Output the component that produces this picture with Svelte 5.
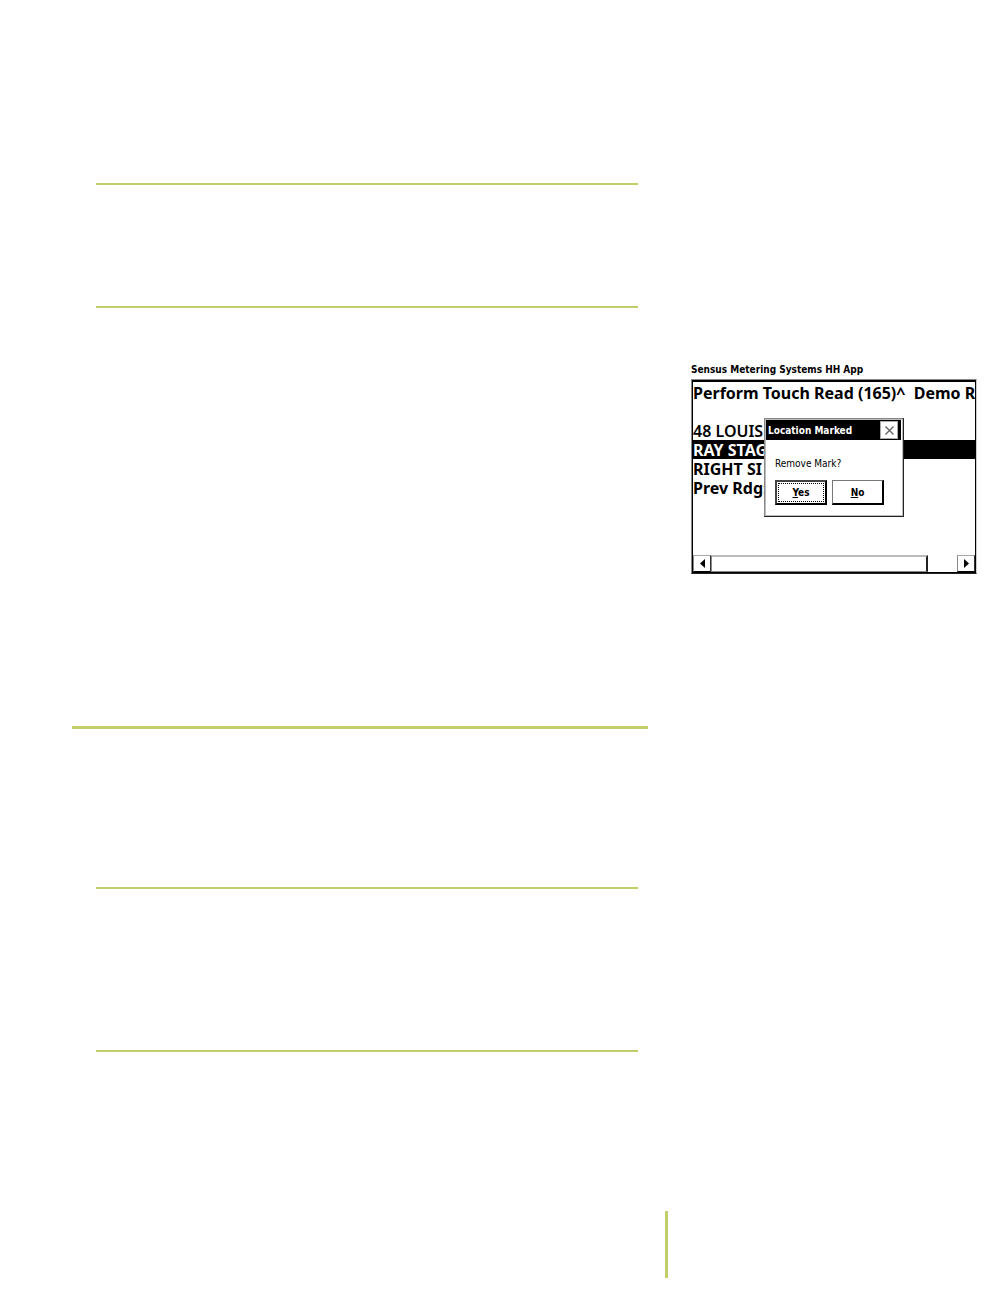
<script>
  const lines = [
    { text: 'Perform Touch Read (165)^  Demo R' },
    { text: '' },
    { text: '48 LOUIS', medium: true },
    { text: 'RAY STAG', selected: true },
    { text: 'RIGHT SI' },
    { text: 'Prev Rdg:' },
  ];

  let open = $state(true);

  function close() {
    open = false;
  }
</script>

<div class="page">
  <div class="columns">
    <main>
      <hr class="first" />
      <hr class="second" />
      <hr class="chapter" />
      <hr class="third" />
      <hr class="fourth" />
    </main>

    <aside>
      <h2>Sensus Metering Systems HH App</h2>
      <div class="screen">
        <div class="lines">
          {#each lines as line}
            <div class="line" class:medium={line.medium} class:selected={line.selected}>{line.text}</div>
          {/each}
        </div>

        <div class="scrollbar">
          <button class="arrow" aria-label="Scroll left">
            <svg width="5" height="9" viewBox="0 0 5 9"><path d="M5 0v9L0 4.5z" /></svg>
          </button>
          <div class="thumb"></div>
          <button class="arrow right" aria-label="Scroll right">
            <svg width="5" height="9" viewBox="0 0 5 9"><path d="M0 0v9l5-4.5z" /></svg>
          </button>
        </div>

        {#if open}
          <div class="dialog" role="dialog" aria-labelledby="dialog-title">
            <div class="titlebar">
              <span id="dialog-title">Location Marked</span>
              <button class="close" aria-label="Close" onclick={close}>
                <svg width="9" height="9" viewBox="0 0 9 9"><path d="M.5.5l8 8M8.5.5l-8 8" /></svg>
              </button>
            </div>
            <p>Remove Mark?</p>
            <div class="actions">
              <button class="default" onclick={close}><span><u>Y</u>es</span></button>
              <button onclick={close}><span><u>N</u>o</span></button>
            </div>
          </div>
        {/if}
      </div>
    </aside>
  </div>

  <footer></footer>
</div>

<style>
  :global(body) {
    margin: 0;
    background: #fff;
  }

  .page {
    box-sizing: border-box;
    padding: 183px 31px 18px 72px;
    font-family: 'Noto Sans', 'Open Sans', sans-serif;
    color: #000;
  }

  .columns {
    display: grid;
    grid-template-columns: minmax(0, 1fr) 286px;
    column-gap: 43px;
  }

  hr {
    height: 2px;
    margin: 0 10px 0 24px;
    border: 0;
    background: #c3cd69;
  }

  hr.second {
    margin-top: 121px;
  }

  hr.chapter {
    height: 3px;
    margin: 418px 0 0;
  }

  hr.third {
    margin-top: 158px;
  }

  hr.fourth {
    margin-top: 161px;
  }

  aside {
    padding-top: 179px;
  }

  h2,
  .dialog,
  .actions button {
    font-family: 'DejaVu Sans Condensed', 'DejaVu Sans', sans-serif;
    font-stretch: condensed;
    font-size: 10px;
  }

  h2,
  .titlebar,
  .actions button {
    font-weight: 700;
  }

  h2 {
    margin: 0 0 1px;
    line-height: 16px;
    white-space: nowrap;
  }

  .screen {
    position: relative;
    padding: 2px 1px 1px;
    border: 1px solid #888;
    border-right-color: #ccc;
    border-bottom-color: #222;
    box-shadow: inset 0 0 0 1px #000, inset 0 2px 0 #000;
    background: #fff;
  }

  .lines {
    box-sizing: border-box;
    min-height: 173px;
    padding-top: 1px;
    overflow: hidden;
  }

  .line {
    height: 19px;
    font-size: 16px;
    line-height: 21px;
    font-weight: 700;
    white-space: pre;
  }

  .line.medium {
    font-weight: 600;
  }

  .line.selected {
    background: #000;
    color: #fff;
  }

  .scrollbar {
    display: flex;
    height: 17px;
  }

  button {
    padding: 0;
    color: inherit;
    background: #fff;
    border: 1px solid #888;
    border-radius: 0;
  }

  .arrow {
    display: flex;
    align-items: center;
    justify-content: center;
    width: 18px;
    border-color: #aaa #333 #000 #888;
  }

  .arrow.right {
    margin-left: auto;
  }

  .thumb {
    box-sizing: border-box;
    width: 77%;
    border: 1px solid #888;
    border-top: 2px solid #bbb;
    border-right: 2px solid #222;
  }

  .dialog {
    position: absolute;
    top: 38px;
    left: 72px;
    box-sizing: border-box;
    width: 140px;
    padding: 1px 1px 10px;
    border: 1px solid #888;
    border-right: 2px solid #222;
    border-bottom: 2px solid #222;
    outline: 1px solid #bbb;
    outline-offset: -2px;
    background: #fff;
  }

  .titlebar {
    display: flex;
    align-items: center;
    justify-content: space-between;
    height: 20px;
    padding: 0 3px 0 2px;
    background: #000;
    color: #fff;
    white-space: nowrap;
  }

  .close {
    display: flex;
    align-items: center;
    justify-content: center;
    width: 18px;
    height: 18px;
    border: 1px solid #aaa;
  }

  .close path {
    fill: none;
    stroke: #666;
    stroke-width: 1.4;
  }

  .dialog p {
    margin: 16px 0 8px 9px;
    line-height: 16px;
  }

  .actions {
    display: flex;
    gap: 5px;
    margin-left: 9px;
  }

  .actions button {
    box-sizing: border-box;
    width: 52px;
    height: 25px;
    border: 2px solid #000;
    border-top: 1px solid #777;
    border-left: 1px solid #777;
  }

  .actions .default {
    padding: 1px;
    border: 2px solid #000;
    border-top-color: #444;
    border-left-color: #444;
  }

  .default span {
    display: block;
    line-height: 17px;
    border: 1px dotted #000;
  }

  footer {
    box-sizing: border-box;
    width: 312px;
    min-height: 67px;
    margin: 159px 0 0 auto;
    border-left: 3px solid #c3cd69;
  }
</style>
